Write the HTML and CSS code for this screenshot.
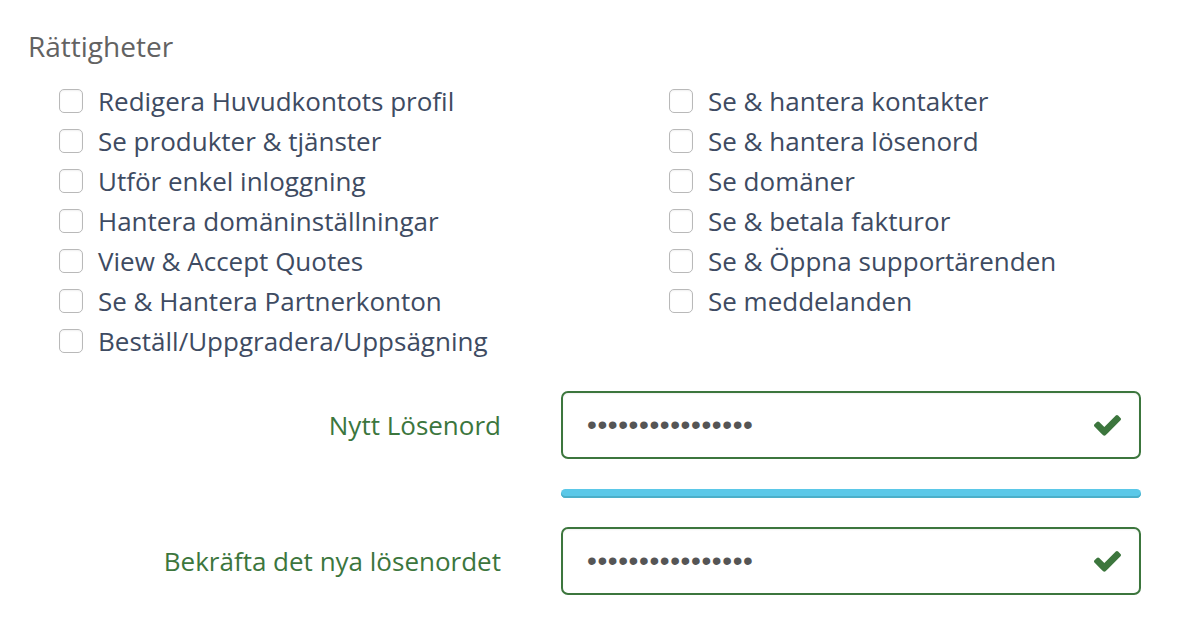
FILE: index.html
```html
<!DOCTYPE html>
<html>
<head>
<meta charset="utf-8">
<link rel="stylesheet" href="styles.css">
</head>
<body>
<div class="page">
  <h3 class="title">Rättigheter</h3>
  <div class="perms">
    <div class="col">
      <label class="perm"><span class="box"></span>Redigera Huvudkontots profil</label>
      <label class="perm"><span class="box"></span>Se produkter &amp; tjänster</label>
      <label class="perm"><span class="box"></span>Utför enkel inloggning</label>
      <label class="perm"><span class="box"></span>Hantera domäninställningar</label>
      <label class="perm"><span class="box"></span>View &amp; Accept Quotes</label>
      <label class="perm"><span class="box"></span>Se &amp; Hantera Partnerkonton</label>
      <label class="perm"><span class="box"></span>Beställ/Uppgradera/Uppsägning</label>
    </div>
    <div class="col col-right">
      <label class="perm"><span class="box"></span>Se &amp; hantera kontakter</label>
      <label class="perm"><span class="box"></span>Se &amp; hantera lösenord</label>
      <label class="perm"><span class="box"></span>Se domäner</label>
      <label class="perm"><span class="box"></span>Se &amp; betala fakturor</label>
      <label class="perm"><span class="box"></span>Se &amp; Öppna supportärenden</label>
      <label class="perm"><span class="box"></span>Se meddelanden</label>
    </div>
  </div>

  <div class="form-row first">
    <div class="label">Nytt Lösenord</div>
    <div class="field">
      <div class="input">
        <span class="dots">••••••••••••••••</span>
        <svg class="check" viewBox="121 338 1550 1188" width="27" height="21"><path d="M1671 566q0 40-28 68l-724 724-136 136q-28 28-68 28t-68-28l-136-136-362-362q-28-28-28-68t28-68l136-136q28-28 68-28t68 28l294 295 656-657q28-28 68-28t68 28l136 136q28 28 28 68z" fill="#3c763d"/></svg>
      </div>
    </div>
  </div>
  <div class="form-row bar-row">
    <div class="label"></div>
    <div class="field"><div class="bar"></div></div>
  </div>
  <div class="form-row">
    <div class="label">Bekräfta det nya lösenordet</div>
    <div class="field">
      <div class="input">
        <span class="dots">••••••••••••••••</span>
        <svg class="check" viewBox="121 338 1550 1188" width="27" height="21"><path d="M1671 566q0 40-28 68l-724 724-136 136q-28 28-68 28t-68-28l-136-136-362-362q-28-28-28-68t28-68l136-136q28-28 68-28t68 28l294 295 656-657q28-28 68-28t68 28l136 136q28 28 28 68z" fill="#3c763d"/></svg>
      </div>
    </div>
  </div>
</div>
</body>
</html>
```

FILE: styles.css
```css
* { box-sizing: border-box; }
html, body { margin: 0; padding: 0; background: #fff; }
body {
  font-family: "Open Sans", "Liberation Sans", sans-serif;
  font-size: 26px;
  color: #3d4c63;
}
.page { padding: 26px 28px 0 28px; width: 1190px; }
.title {
  margin: 0 0 15px 0;
  font-size: 28px;
  font-weight: 400;
  color: #626262;
  line-height: 40px;
}
.perms { display: flex; padding-left: 31px; }
.col { width: 610px; flex: none; display: flex; flex-direction: column; }
.col.col-right { width: auto; flex: 1; }
.perm {
  display: flex;
  align-items: center;
  height: 40px;
  line-height: 40px;
  color: #3e4b62;
}
.box {
  width: 24px;
  height: 24px;
  border: 1px solid #b9b9b9;
  border-radius: 5px;
  margin-right: 15px;
  background: #fff;
  box-shadow: inset 0 1px 2px rgba(0,0,0,0.06);
  flex: none;
}
.form-row { display: flex; align-items: center; }
.form-row.first { margin-top: 30px; }
.label {
  width: 473px;
  text-align: right;
  color: #3c763d;
  font-size: 26px;
}
.field { margin-left: 60px; width: 580px; }
.input {
  height: 68px;
  border: 2px solid #3c763d;
  border-radius: 7px;
  display: flex;
  align-items: center;
  justify-content: space-between;
  padding: 0 18px 0 24px;
  box-shadow: inset 0 1px 2px rgba(0,0,0,0.06);
}
.dots {
  color: #555;
  font-size: 28px;
  line-height: 30px;
  letter-spacing: 0.6px;
  font-family: "Liberation Sans", sans-serif;
}
.check { display: block; }
.bar-row { height: 68px; }
.bar {
  height: 9px;
  border-radius: 5px;
  background: #5bc8e8;
  box-shadow: inset 0 -2px 0 #4bafc9;
}
```
